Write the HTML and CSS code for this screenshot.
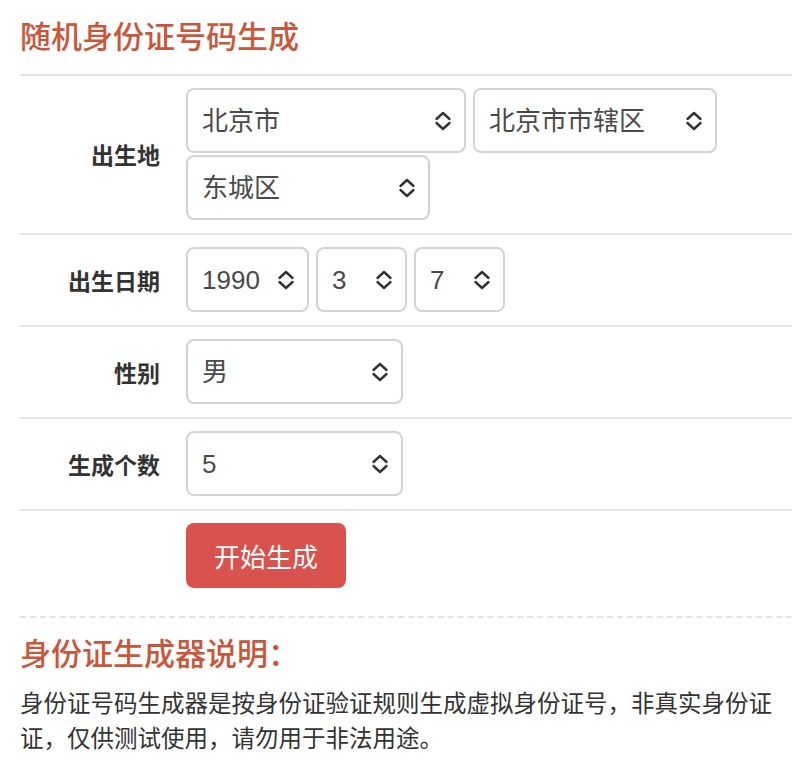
FILE: index.html
```html
<!DOCTYPE html>
<html lang="zh-CN">
<head>
<meta charset="UTF-8">
<meta name="viewport" content="width=device-width, initial-scale=1.0">
<title>随机身份证号码生成</title>
<link rel="stylesheet" href="styles.css">
</head>
<body>
<div class="page">
  <h1 class="title">随机身份证号码生成</h1>
  <form class="gen-form" onsubmit="event.preventDefault();">
    <div class="form-row">
      <label class="row-label">出生地</label>
      <div class="row-fields">
        <div class="select-wrap w-province">
          <select><option>北京市</option><option>天津市</option><option>上海市</option></select>
          <svg class="arrows" viewBox="0 0 18 20"><polyline points="2.5,8 9,2 15.5,8"/><polyline points="2.5,12 9,18 15.5,12"/></svg>
        </div>
        <div class="select-wrap w-city">
          <select><option>北京市市辖区</option></select>
          <svg class="arrows" viewBox="0 0 18 20"><polyline points="2.5,8 9,2 15.5,8"/><polyline points="2.5,12 9,18 15.5,12"/></svg>
        </div>
        <div class="select-wrap w-city">
          <select><option>东城区</option><option>西城区</option><option>朝阳区</option></select>
          <svg class="arrows" viewBox="0 0 18 20"><polyline points="2.5,8 9,2 15.5,8"/><polyline points="2.5,12 9,18 15.5,12"/></svg>
        </div>
      </div>
    </div>

    <div class="form-row">
      <label class="row-label">出生日期</label>
      <div class="row-fields">
        <div class="select-wrap w-year">
          <select><option>1990</option><option>1991</option></select>
          <svg class="arrows" viewBox="0 0 18 20"><polyline points="2.5,8 9,2 15.5,8"/><polyline points="2.5,12 9,18 15.5,12"/></svg>
        </div>
        <div class="select-wrap w-day">
          <select><option>3</option><option>4</option></select>
          <svg class="arrows" viewBox="0 0 18 20"><polyline points="2.5,8 9,2 15.5,8"/><polyline points="2.5,12 9,18 15.5,12"/></svg>
        </div>
        <div class="select-wrap w-day">
          <select><option>7</option><option>8</option></select>
          <svg class="arrows" viewBox="0 0 18 20"><polyline points="2.5,8 9,2 15.5,8"/><polyline points="2.5,12 9,18 15.5,12"/></svg>
        </div>
      </div>
    </div>

    <div class="form-row">
      <label class="row-label">性别</label>
      <div class="row-fields">
        <div class="select-wrap w-mid">
          <select><option>男</option><option>女</option></select>
          <svg class="arrows" viewBox="0 0 18 20"><polyline points="2.5,8 9,2 15.5,8"/><polyline points="2.5,12 9,18 15.5,12"/></svg>
        </div>
      </div>
    </div>

    <div class="form-row">
      <label class="row-label">生成个数</label>
      <div class="row-fields">
        <div class="select-wrap w-mid">
          <select><option>5</option><option>10</option><option>20</option></select>
          <svg class="arrows" viewBox="0 0 18 20"><polyline points="2.5,8 9,2 15.5,8"/><polyline points="2.5,12 9,18 15.5,12"/></svg>
        </div>
      </div>
    </div>

    <div class="form-row">
      <span class="row-label"></span>
      <div class="row-fields">
        <button type="submit" class="btn-generate">开始生成</button>
      </div>
    </div>
  </form>

  <div class="about">
    <h2 class="title">身份证生成器说明：</h2>
    <p>身份证号码生成器是按身份证验证规则生成虚拟身份证号，非真实身份证证，仅供测试使用，请勿用于非法用途。</p>
  </div>
</div>
</body>
</html>
```

FILE: styles.css
```css
body {
  margin: 0;
  background: #ffffff;
  color: #333333;
  font-family: 'Liberation Sans', 'Noto Sans CJK SC', sans-serif;
}

.page {
  padding: 0 8px 0 20px;
}

.title {
  margin: 0;
  color: #c9573b;
  font-size: 31px;
  font-weight: 500;
  line-height: 40px;
}

h1.title {
  padding-top: 18px;
  margin-bottom: 16px;
}

.form-row {
  display: flex;
  align-items: center;
  border-top: 2px solid #e2e2e2;
  padding: 12px 0 13px;
}

.row-label {
  width: 140px;
  flex-shrink: 0;
  text-align: right;
  font-size: 23px;
  font-weight: bold;
  color: #333333;
}

.row-fields {
  flex: 1;
  display: flex;
  flex-wrap: wrap;
  gap: 2px 7px;
  margin-left: 26px;
}

.select-wrap {
  position: relative;
  height: 65px;
}

.select-wrap select {
  -webkit-appearance: none;
  appearance: none;
  width: 100%;
  height: 100%;
  box-sizing: border-box;
  border: 2px solid #d3d3d3;
  border-radius: 8px;
  background: #ffffff;
  padding: 0 40px 0 14px;
  font-family: 'Liberation Sans', 'Noto Sans CJK SC', sans-serif;
  font-size: 26px;
  color: #4a4a4a;
  outline: none;
}

.select-wrap .arrows {
  position: absolute;
  right: 14px;
  top: 50%;
  width: 18px;
  height: 20px;
  margin-top: -10px;
  fill: none;
  stroke: #333333;
  stroke-width: 2.4;
  stroke-linecap: round;
  stroke-linejoin: round;
  pointer-events: none;
}

.w-province { width: 280px; }
.w-city { width: 244px; }
.w-year { width: 123px; }
.w-day { width: 91px; }
.w-mid { width: 217px; }

.btn-generate {
  width: 160px;
  height: 65px;
  border: none;
  border-radius: 8px;
  background-color: #da524e;
  color: #ffffff;
  font-family: 'Liberation Sans', 'Noto Sans CJK SC', sans-serif;
  font-size: 26px;
  cursor: pointer;
}

.about {
  margin-top: 15px;
  border-top: 2px dashed #e4e4e4;
  padding-top: 17px;
}

.about p {
  margin: 12px 0 0;
  font-size: 23.5px;
  line-height: 35px;
  color: #333333;
}
```
